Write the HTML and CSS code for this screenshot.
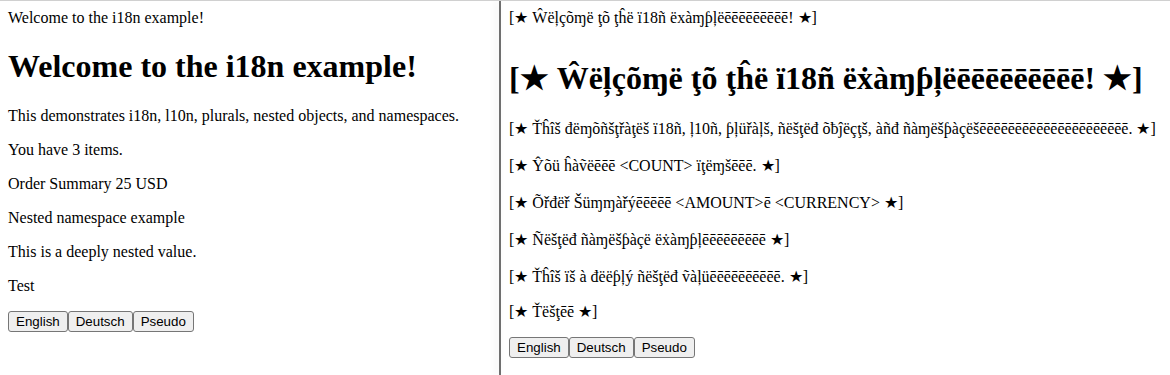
FILE: index.html
```
<!DOCTYPE html>
<html lang="en">
<head>
<meta charset="utf-8">
<title>i18n example</title>
<link rel="stylesheet" href="styles.css">
</head>
<body>
<div class="split">
  <section class="pane pane-left">
    <div class="intro">Welcome to the i18n example!</div>
    <h1 class="title">Welcome to the i18n example!</h1>
    <p class="line">This demonstrates i18n, l10n, plurals, nested objects, and namespaces.</p>
    <p class="line">You have 3 items.</p>
    <p class="line">Order Summary 25 USD</p>
    <p class="line">Nested namespace example</p>
    <p class="line">This is a deeply nested value.</p>
    <p class="line">Test</p>
    <div class="langs"><button class="lang-btn">English</button><button class="lang-btn">Deutsch</button><button class="lang-btn">Pseudo</button></div>
  </section>
  <div class="divider"></div>
  <section class="pane pane-right">
    <div class="intro">[★ Ŵëļçõɱë ţõ ţĥë ï18ñ ëxàɱƥļëēēēēēēēēē! ★]</div>
    <h1 class="title">[★ Ŵëļçõɱë ţõ ţĥë ï18ñ ëẋàɱƥļëēēēēēēēēē! ★]</h1>
    <p class="line">[★ Ťĥîš đëɱõñšţřàţëš ï18ñ, ļ10ñ, ƥļüřàļš, ñëšţëđ õƀĵëçţš, àñđ ñàɱëšƥàçëšēēēēēēēēēēēēēēēēēēēēē. ★]</p>
    <p class="line">[★ Ŷõü ĥàṽëēēē &lt;COUNT&gt; ïţëɱšēēē. ★]</p>
    <p class="line">[★ Õřđëř Šüɱɱàřýēēēēē &lt;AMOUNT&gt;ē &lt;CURRENCY&gt; ★]</p>
    <p class="line">[★ Ñëšţëđ ñàɱëšƥàçë ëẋàɱƥļēēēēēēēēē ★]</p>
    <p class="line">[★ Ťĥîš ïš à đëëƥļý ñëšţëđ ṽàļüēēēēēēēēēē. ★]</p>
    <p class="line line-last">[★ Ťëšţēē ★]</p>
    <div class="langs"><button class="lang-btn">English</button><button class="lang-btn">Deutsch</button><button class="lang-btn">Pseudo</button></div>
  </section>
</div>
</body>
</html>
```
FILE: styles.css
```
html, body {
  margin: 0;
  padding: 0;
  background: #ffffff;
}

body {
  font-family: "Liberation Serif", "Times New Roman", "DejaVu Serif", serif;
  font-size: 16px;
  color: #000000;
}

.split {
  display: flex;
  height: 100vh;
  box-sizing: border-box;
  border-top: 1px solid #d0d0d0;
  overflow: hidden;
}

.pane {
  padding: 8px;
  box-sizing: border-box;
  height: 100%;
  overflow: hidden;
}

.pane-left {
  width: 499px;
  flex: none;
}

.pane-right {
  flex: 1;
  min-width: 0;
  white-space: nowrap;
}

.divider {
  width: 2px;
  flex: none;
  background: #6f6f6f;
  box-shadow: -3px 0 7px rgba(0, 0, 0, 0.10);
}

.intro {
  margin: 0;
}

.title {
  font-size: 32px;
  font-weight: bold;
  margin: 21.44px 0;
}

.line {
  margin: 16px 0;
}

/* pseudo-locale pane: taller line boxes from fallback glyphs */
.pane-right .intro {
  line-height: 18px;
}

.pane-right .title {
  line-height: 48px;
  margin: 27px 0 16px;
}

.pane-right .line {
  line-height: 21px;
}

.pane-right .line-last {
  line-height: 18px;
}

.langs {
  display: flex;
}

.lang-btn {
  font-family: "Liberation Sans", Arial, sans-serif;
  font-size: 13.333px;
  line-height: normal;
  color: #000000;
  background: #efefef;
  border: 1px solid #767676;
  border-radius: 3px;
  padding: 2px 7px;
  margin: 0;
}
```
